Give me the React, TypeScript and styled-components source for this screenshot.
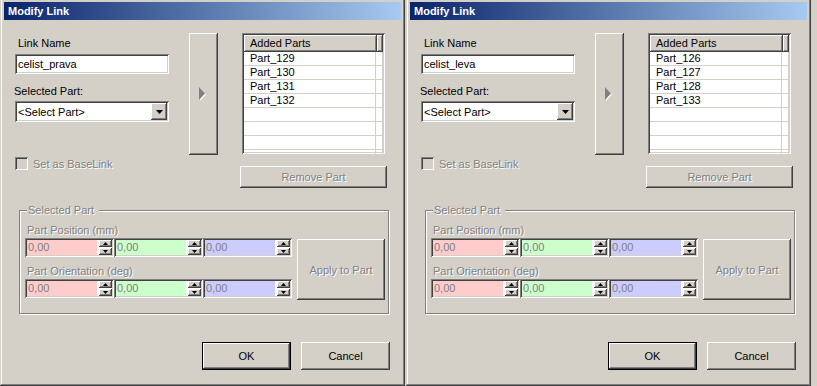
import React from 'react';
import styled, { createGlobalStyle, css } from 'styled-components';

const GlobalStyle = createGlobalStyle`
  html, body {
    margin: 0;
    padding: 0;
    background: #d4d0c8;
    overflow: hidden;
  }
  body {
    font-family: "Liberation Sans", Tahoma, Arial, sans-serif;
    font-size: 11px;
    color: #000000;
  }
`;

const raised = css`
  box-shadow: inset -1px -1px #404040, inset 1px 1px #ffffff,
    inset -2px -2px #808080, inset 2px 2px #d4d0c8;
`;

const sunken = css`
  box-shadow: inset 1px 1px #808080, inset -1px -1px #ffffff,
    inset 2px 2px #404040, inset -2px -2px #d4d0c8;
`;

const disabledText = css`
  color: #808080;
  text-shadow: 1px 1px 0 #ffffff;
`;

const Desktop = styled.div`
  display: flex;
  gap: 1px;
  margin-top: -2px;
  height: 388px;
`;

const Window = styled.div`
  width: 405px;
  height: 388px;
  box-sizing: border-box;
  padding: 4px;
  background: #d4d0c8;
  box-shadow: inset -1px -1px #404040, inset 1px 1px #d4d0c8,
    inset -2px -2px #808080, inset 2px 2px #ffffff;
`;

const TitleBar = styled.div`
  height: 18px;
  line-height: 18px;
  padding-left: 4px;
  background: linear-gradient(to right, #0a246a, #a6caf0);
  color: #ffffff;
  font-weight: bold;
  font-size: 11px;
`;

const Body = styled.div`
  display: flex;
  flex-direction: column;
  padding: 13px 11px 0 11px;
`;

const TopSection = styled.div`
  display: flex;
  align-items: flex-start;
  height: 155px;
`;

const LeftCol = styled.div`
  display: flex;
  flex-direction: column;
  width: 154px;
  padding-top: 4px;
`;

const Label = styled.div<{ $disabled?: boolean; $indent?: number; $top?: number }>`
  height: 13px;
  line-height: 13px;
  white-space: nowrap;
  margin-left: ${(p) => p.$indent ?? 0}px;
  margin-top: ${(p) => p.$top ?? 0}px;
  ${(p) => p.$disabled && disabledText}
`;

const TextBox = styled.div`
  width: 154px;
  height: 20px;
  box-sizing: border-box;
  margin-top: 4px;
  padding-left: 3px;
  line-height: 20px;
  background: #ffffff;
  ${sunken}
`;

const Combo = styled.div`
  display: flex;
  align-items: center;
  justify-content: space-between;
  width: 154px;
  height: 21px;
  box-sizing: border-box;
  margin-top: 3px;
  padding: 2px 2px 2px 3px;
  background: #ffffff;
  ${sunken}
`;

const ComboButton = styled.div`
  display: flex;
  align-items: center;
  justify-content: center;
  width: 16px;
  height: 17px;
  background: #d4d0c8;
  ${raised}
`;

const CheckRow = styled.div`
  display: flex;
  align-items: flex-start;
  gap: 5px;
  margin-top: 35px;
`;

const CheckBox = styled.div`
  width: 13px;
  height: 13px;
  box-sizing: border-box;
  background: #d4d0c8;
  ${sunken}
`;

const ArrowButton = styled.div`
  display: flex;
  align-items: center;
  justify-content: center;
  width: 29px;
  height: 122px;
  margin-left: 20px;
  padding-right: 2px;
  box-sizing: border-box;
  ${raised}
`;

const RightCol = styled.div`
  display: flex;
  flex-direction: column;
  width: 147px;
  margin-left: 22px;
`;

const ListBox = styled.div`
  width: 143px;
  height: 121px;
  margin-left: 2px;
  box-sizing: border-box;
  padding: 2px;
  background: #ffffff;
  overflow: hidden;
  ${sunken}
`;

const HeaderRow = styled.div`
  display: flex;
  height: 17px;
`;

const HeaderCell = styled.div<{ $width?: number }>`
  ${(p) => (p.$width ? `width: ${p.$width}px;` : 'flex: 1;')}
  box-sizing: border-box;
  padding-left: 6px;
  line-height: 17px;
  background: #d4d0c8;
  ${raised}
`;

const Row = styled.div`
  display: flex;
  height: 14px;
  box-sizing: border-box;
  border-bottom: 1px solid #d4d0c8;
`;

const Cell = styled.div<{ $width?: number }>`
  ${(p) => (p.$width ? `width: ${p.$width}px;` : 'flex: 1;')}
  box-sizing: border-box;
  padding-left: 6px;
  line-height: 13px;
  border-right: 1px solid #d4d0c8;
`;

const PushButton = styled.div<{ $w: number; $h: number; $disabled?: boolean; $default?: boolean }>`
  display: flex;
  align-items: center;
  justify-content: center;
  width: ${(p) => p.$w}px;
  height: ${(p) => p.$h}px;
  box-sizing: border-box;
  background: #d4d0c8;
  border: ${(p) => (p.$default ? '1px solid #000000' : 'none')};
  ${raised}
  ${(p) => p.$disabled && disabledText}
`;

const RemoveButton = styled(PushButton)`
  margin-top: 12px;
`;

const GroupBox = styled.div`
  position: relative;
  display: flex;
  align-items: flex-start;
  width: 370px;
  height: 104px;
  box-sizing: border-box;
  margin: 22px 0 0 4px;
  padding: 13px 0 0 5px;
  border: 1px solid #808080;
  box-shadow: inset 1px 1px #ffffff, 1px 1px #ffffff;
`;

const GroupTitle = styled.div`
  position: absolute;
  top: -7px;
  left: 7px;
  padding: 0 5px 0 1px;
  line-height: 13px;
  background: #d4d0c8;
  ${disabledText}
`;

const SpinsCol = styled.div`
  display: flex;
  flex-direction: column;
`;

const SpinRow = styled.div`
  display: flex;
  margin-top: 1px;
`;

const SpinEdit = styled.div`
  display: flex;
  width: 89px;
  height: 19px;
  box-sizing: border-box;
  padding: 2px;
  gap: 2px;
  background: #ffffff;
  ${sunken}
`;

const SpinField = styled.div<{ $bg: string }>`
  width: 70px;
  height: 15px;
  line-height: 15px;
  padding-left: 1px;
  box-sizing: border-box;
  background: ${(p) => p.$bg};
  color: #808080;
`;

const Spinner = styled.div`
  display: flex;
  flex-direction: column;
  gap: 1px;
  width: 13px;
`;

const SpinButton = styled.div`
  display: flex;
  align-items: center;
  justify-content: center;
  height: 7px;
  background: #d4d0c8;
  ${raised}
`;

const ApplyButton = styled(PushButton)`
  margin: 15px 0 0 5px;
`;

const ButtonRow = styled.div`
  display: flex;
  justify-content: flex-end;
  gap: 10px;
  margin-top: 28px;
`;

const DownArrow = ({ w = 7, h = 4 }: { w?: number; h?: number }) => (
  <svg width={w} height={h} viewBox={`0 0 ${w} ${h}`}>
    <polygon points={`0,0 ${w},0 ${w / 2},${h}`} fill="#000000" />
  </svg>
);

const UpArrow = ({ w = 5, h = 3 }: { w?: number; h?: number }) => (
  <svg width={w} height={h} viewBox={`0 0 ${w} ${h}`}>
    <polygon points={`0,${h} ${w},${h} ${w / 2},0`} fill="#000000" />
  </svg>
);

const RightTriangle = () => (
  <svg width="8" height="15" viewBox="0 0 8 15">
    <polygon points="1,1 7,7.5 1,14" fill="#ffffff" />
    <polygon points="0,0 6,6.5 0,13" fill="#808080" />
  </svg>
);

const SpinBox = ({ bg }: { bg: string }) => (
  <SpinEdit>
    <SpinField $bg={bg}>0,00</SpinField>
    <Spinner>
      <SpinButton>
        <UpArrow />
      </SpinButton>
      <SpinButton>
        <DownArrow w={5} h={3} />
      </SpinButton>
    </Spinner>
  </SpinEdit>
);

const colors = ['#ffcccc', '#ccffcc', '#ccccff'];

const ModifyLinkDialog = ({ linkName, parts }: { linkName: string; parts: string[] }) => {
  const rows = [...parts, '', '', '', ''];
  return (
    <Window>
      <TitleBar>Modify Link</TitleBar>
      <Body>
        <TopSection>
          <LeftCol>
            <Label $indent={3}>Link Name</Label>
            <TextBox>{linkName}</TextBox>
            <Label $indent={-1} $top={11}>Selected Part:</Label>
            <Combo>
              <span>&lt;Select Part&gt;</span>
              <ComboButton>
                <DownArrow />
              </ComboButton>
            </Combo>
            <CheckRow>
              <CheckBox />
              <Label $disabled $top={1}>Set as BaseLink</Label>
            </CheckRow>
          </LeftCol>
          <ArrowButton>
            <RightTriangle />
          </ArrowButton>
          <RightCol>
            <ListBox>
              <HeaderRow>
                <HeaderCell $width={135}>Added Parts</HeaderCell>
                <HeaderCell />
              </HeaderRow>
              {rows.map((p, i) => (
                <Row key={i}>
                  <Cell $width={136}>{p}</Cell>
                  <Cell />
                </Row>
              ))}
            </ListBox>
            <RemoveButton $w={147} $h={22} $disabled>
              Remove Part
            </RemoveButton>
          </RightCol>
        </TopSection>

        <GroupBox>
          <GroupTitle>Selected Part</GroupTitle>
          <SpinsCol>
            <Label $disabled $indent={2}>Part Position (mm)</Label>
            <SpinRow>
              {colors.map((c) => (
                <SpinBox key={c} bg={c} />
              ))}
            </SpinRow>
            <Label $disabled $indent={2} $top={8}>Part Orientation (deg)</Label>
            <SpinRow>
              {colors.map((c) => (
                <SpinBox key={c} bg={c} />
              ))}
            </SpinRow>
          </SpinsCol>
          <ApplyButton $w={88} $h={61} $disabled>
            Apply to Part
          </ApplyButton>
        </GroupBox>

        <ButtonRow>
          <PushButton $w={89} $h={28} $default>
            OK
          </PushButton>
          <PushButton $w={89} $h={28}>
            Cancel
          </PushButton>
        </ButtonRow>
      </Body>
    </Window>
  );
};

const App: React.FC = () => (
  <>
    <GlobalStyle />
    <Desktop>
      <ModifyLinkDialog linkName="celist_prava" parts={['Part_129', 'Part_130', 'Part_131', 'Part_132']} />
      <ModifyLinkDialog linkName="celist_leva" parts={['Part_126', 'Part_127', 'Part_128', 'Part_133']} />
    </Desktop>
  </>
);

export default App;
